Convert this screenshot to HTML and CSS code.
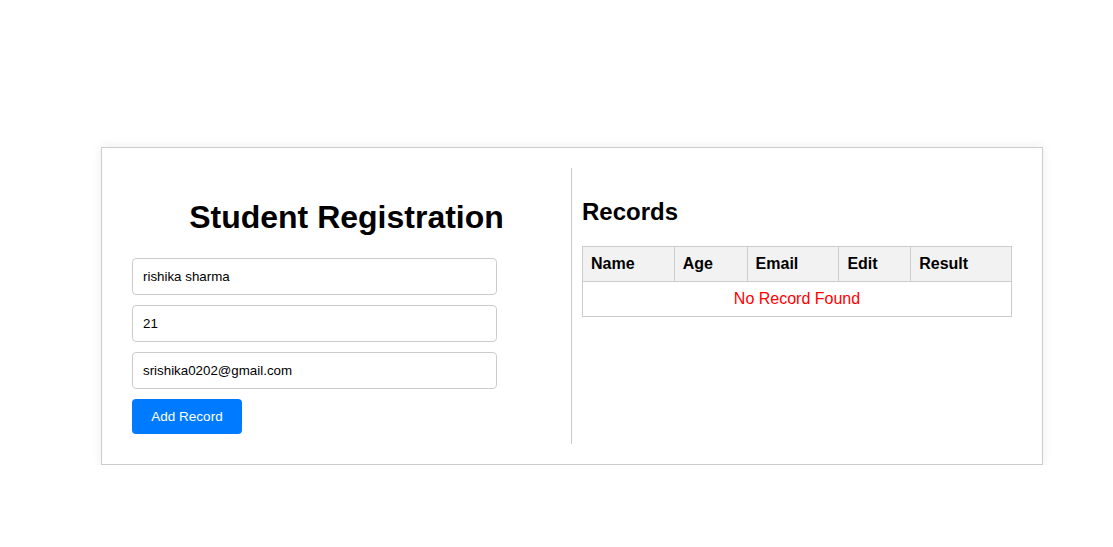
FILE: index.html
```html
<!DOCTYPE html>
<html lang="en">
<head>
<meta charset="utf-8">
<title>Student Registration</title>
<link rel="stylesheet" href="styles.css">
</head>
<body>
<div class="card">
  <div class="col form-col">
    <h1 class="title">Student Registration</h1>
    <input class="field" type="text" value="rishika sharma">
    <input class="field" type="text" value="21">
    <input class="field" type="text" value="srishika0202@gmail.com">
    <button class="btn">Add Record</button>
  </div>
  <div class="col records-col">
    <h2 class="subtitle">Records</h2>
    <table class="records">
      <thead>
        <tr><th class="c-name">Name</th><th class="c-age">Age</th><th class="c-email">Email</th><th class="c-edit">Edit</th><th class="c-result">Result</th></tr>
      </thead>
      <tbody>
        <tr><td colspan="5" class="empty">No Record Found</td></tr>
      </tbody>
    </table>
  </div>
</div>
</body>
</html>
```

FILE: styles.css
```css
* { box-sizing: border-box; }
html, body { margin: 0; padding: 0; background: #fff; }
body {
  font-family: "Liberation Sans", Arial, sans-serif;
  color: #000;
}
.card {
  margin: 147px 0 0 101px;
  width: 942px;
  padding: 20px;
  border: 1px solid #ccc;
  background: #fff;
  box-shadow: 0 0 10px rgba(0,0,0,0.08);
  display: flex;
}
.col {
  width: 450px;
  padding: 10px;
}
.form-col {
  border-right: 1px solid #ccc;
  display: flex;
  flex-direction: column;
  align-items: flex-start;
  gap: 10px;
}
.title {
  align-self: stretch;
  text-align: center;
  font-size: 32px;
  font-weight: bold;
  margin: 21px 0 12px;
  line-height: 37px;
}
.field {
  width: 365px;
  height: 37px;
  padding: 10px;
  border: 1px solid #ccc;
  border-radius: 4px;
  font-family: "Liberation Sans", Arial, sans-serif;
  font-size: 13.33px;
  color: #000;
  outline: none;
}
.btn {
  width: 110px;
  height: 35px;
  border: none;
  border-radius: 4px;
  background: #007bff;
  color: #fff;
  font-family: "Liberation Sans", Arial, sans-serif;
  font-size: 13.5px;
  padding: 0;
}
.subtitle {
  font-size: 24px;
  font-weight: bold;
  margin: 20px 0 20px;
  line-height: 28px;
}
.records {
  width: 100%;
  border-collapse: collapse;
  font-size: 16px;
}
.records th, .records td {
  border: 1px solid #ccc;
  padding: 8px;
  height: 35px;
}
.records th {
  background: #f2f2f2;
  text-align: left;
  font-weight: bold;
}
.c-name { width: 92px; }
.c-age { width: 73px; }
.c-email { width: 92px; }
.c-edit { width: 72px; }
.c-result { width: 101px; }
.records td.empty {
  text-align: center;
  color: #ff0000;
}
```
